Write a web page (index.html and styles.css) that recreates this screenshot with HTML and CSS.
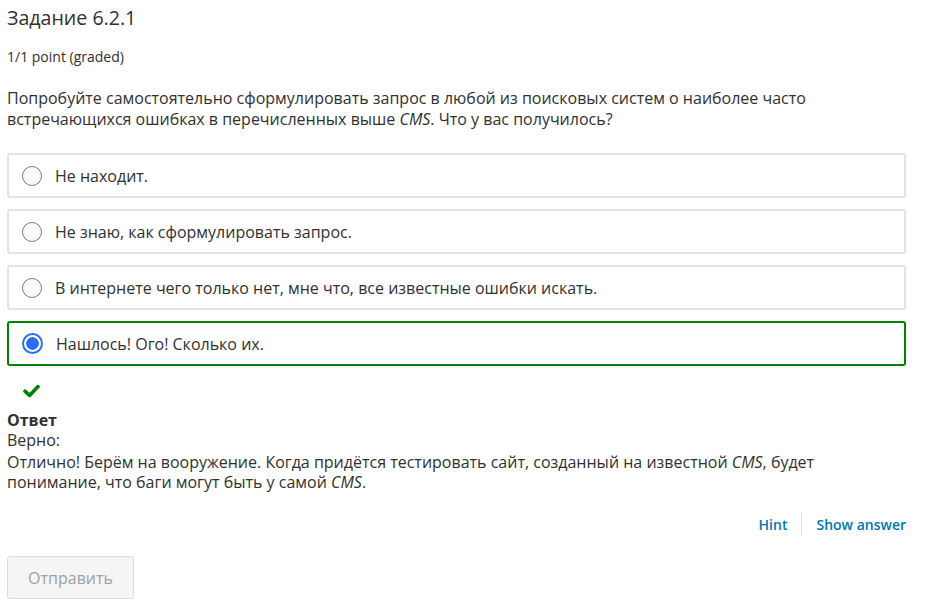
FILE: index.html
```html
<!DOCTYPE html>
<html lang="ru">
<head>
<meta charset="utf-8">
<title>Задание 6.2.1</title>
<link rel="stylesheet" href="styles.css">
</head>
<body>
<div class="problem">
  <h3 class="title">Задание 6.2.1</h3>
  <div class="points">1/1 point (graded)</div>
  <p class="question">Попробуйте самостоятельно сформулировать запрос в любой из поисковых систем о наиболее часто встречающихся ошибках в перечисленных выше <em>CMS</em>. Что у вас получилось?</p>
  <div class="choices">
    <label class="choice"><span class="radio"></span><span class="choice-text">Не находит.</span></label>
    <label class="choice"><span class="radio"></span><span class="choice-text">Не знаю, как сформулировать запрос.</span></label>
    <label class="choice"><span class="radio"></span><span class="choice-text">В интернете чего только нет, мне что, все известные ошибки искать.</span></label>
    <label class="choice choice-correct"><span class="radio radio-checked"></span><span class="choice-text">Нашлось! Ого! Сколько их.</span></label>
  </div>
  <div class="status">
    <svg class="check" width="17" height="14" viewBox="0 0 17 14"><path d="M2 7.2 L6.6 11.4 L15 2.6" fill="none" stroke="#008100" stroke-width="3.6" stroke-linecap="round" stroke-linejoin="round"/></svg>
  </div>
  <div class="answer">
    <div class="answer-label">Ответ</div>
    <div>Верно:</div>
    <div class="answer-text">Отлично! Берём на вооружение. Когда придётся тестировать сайт, созданный на известной <em>CMS</em>, будет понимание, что баги могут быть у самой <em>CMS</em>.</div>
  </div>
  <div class="actions">
    <a class="action">Hint</a>
    <span class="sep"></span>
    <a class="action">Show answer</a>
  </div>
  <div class="submit-row">
    <button class="submit" disabled>Отправить</button>
  </div>
</div>
</body>
</html>
```
FILE: styles.css
```css
html, body {
  margin: 0;
  padding: 0;
  background: #fff;
}
body {
  font-family: "Open Sans", "Noto Sans", sans-serif;
  color: #313131;
}
.problem {
  padding: 0 20px 0 7px;
}
.title {
  margin: 0;
  padding-top: 4px;
  font-size: 19.6px;
  font-weight: 400;
  line-height: 28px;
  color: #313131;
}
.points {
  margin-top: 16px;
  font-size: 14px;
  line-height: 18px;
  color: #313131;
}
.question {
  margin: 22px 0 0 0;
  font-size: 16px;
  line-height: 21px;
}
.question em, .answer em {
  font-style: italic;
}
.choices {
  margin-top: 23px;
  display: flex;
  flex-direction: column;
  gap: 11px;
}
.choice {
  display: flex;
  align-items: center;
  height: 41px;
  border: 2px solid #e4e4e4;
  border-radius: 3px;
  padding: 0 13px;
  font-size: 16px;
}
.choice-correct {
  border-color: #008100;
}
.radio {
  width: 18px;
  height: 18px;
  border: 1.5px solid #767676;
  border-radius: 50%;
  margin-right: 13px;
  flex: none;
  box-sizing: content-box;
}
.radio-checked {
  border: 2px solid #2a6df6;
  width: 17px;
  height: 17px;
  background: radial-gradient(circle, #2a6df6 0 6px, #fff 6.5px);
}
.choice-text {
  line-height: 20px;
}
.status {
  height: 39px;
  display: flex;
  align-items: center;
  padding-left: 16px;
  padding-top: 10px;
  box-sizing: border-box;
}
.answer {
  font-size: 16px;
  line-height: 20px;
  margin-top: 5px;
}
.answer-label {
  font-weight: 700;
}
.answer-text {
  margin-top: 2px;
}
.actions {
  display: flex;
  justify-content: flex-end;
  align-items: center;
  margin-top: 20px;
  font-size: 14px;
  font-weight: 600;
}
.action {
  color: #0075b4;
  cursor: pointer;
}
.sep {
  width: 1px;
  height: 24px;
  background: #ddd;
  margin: 0 14px;
}
.submit-row {
  margin-top: 20px;
}
.submit {
  font-family: "Open Sans", "Noto Sans", sans-serif;
  font-size: 16px;
  color: #a0a0a0;
  background: #f5f5f5;
  border: 1px solid #dcdcdc;
  border-radius: 3px;
  padding: 0 20px;
  height: 43px;
  width: 127px;
}
```
